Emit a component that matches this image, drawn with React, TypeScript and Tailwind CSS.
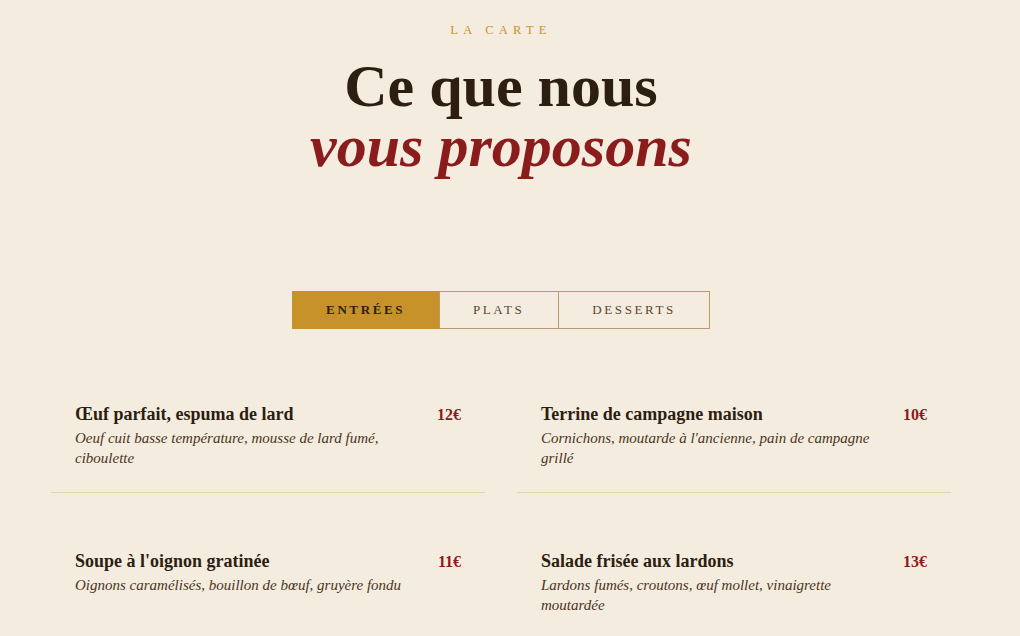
import { useState } from "react";

type Dish = {
  name: string;
  description: string;
  price: string;
};

const menu: Record<string, Dish[]> = {
  entrees: [
    {
      name: "Œuf parfait, espuma de lard",
      description: "Oeuf cuit basse température, mousse de lard fumé, ciboulette",
      price: "12€",
    },
    {
      name: "Terrine de campagne maison",
      description: "Cornichons, moutarde à l'ancienne, pain de campagne grillé",
      price: "10€",
    },
    {
      name: "Soupe à l'oignon gratinée",
      description: "Oignons caramélisés, bouillon de bœuf, gruyère fondu",
      price: "11€",
    },
    {
      name: "Salade frisée aux lardons",
      description: "Lardons fumés, croutons, œuf mollet, vinaigrette moutardée",
      price: "13€",
    },
  ],
  plats: [
    {
      name: "Bœuf bourguignon",
      description: "Joue de bœuf mijotée au vin rouge, carottes, pommes vapeur",
      price: "24€",
    },
    {
      name: "Confit de canard",
      description: "Cuisse de canard confite, pommes sarladaises",
      price: "22€",
    },
  ],
  desserts: [
    {
      name: "Crème brûlée",
      description: "Vanille de Madagascar, cassonade caramélisée",
      price: "8€",
    },
    {
      name: "Tarte Tatin",
      description: "Pommes caramélisées, crème fraîche d'Isigny",
      price: "9€",
    },
  ],
};

const tabs = [
  { id: "entrees", label: "Entrées" },
  { id: "plats", label: "Plats" },
  { id: "desserts", label: "Desserts" },
];

const serif = "font-['Liberation_Serif',serif]";

export default function App() {
  const [active, setActive] = useState("entrees");

  return (
    // pr leaves room where the scrollbar sits in the original capture
    <div className={`min-h-screen bg-[#f5ece0] pr-[18px] text-[#2c1e10] ${serif}`}>
      <section className="pt-[22px] pb-24">
        {/* Header */}
        <div className="text-center">
          <p className="text-[12.5px] leading-4 uppercase tracking-[0.42em] text-[#c8922b]">
            La carte
          </p>
          <h2 className="mt-[18px] text-[60px] leading-[60px] font-bold text-[#2c1e10]">
            Ce que nous
            <br />
            <em className="text-[#8b1c1c]">vous proposons</em>
          </h2>
        </div>

        {/* Tabs */}
        <div className="mt-[115px] flex justify-center">
          {tabs.map((tab, i) => (
            <button
              key={tab.id}
              onClick={() => setActive(tab.id)}
              className={[
                "px-[33.5px] py-[10px] text-[13px] leading-[16px] uppercase tracking-[0.2em] border border-[#b89a6e]",
                i > 0 ? "-ml-px" : "",
                active === tab.id
                  ? "bg-[#c8922b] border-[#c8922b] text-[#2c1e10] font-semibold"
                  : "bg-transparent text-[#5a4630]",
              ].join(" ")}
            >
              {tab.label}
            </button>
          ))}
        </div>

        {/* Dishes */}
        <div className="mx-auto mt-[49px] grid w-[900px] grid-cols-2 gap-8">
          {menu[active].map((dish) => (
            <div key={dish.name} className="border-b border-[#e6d3a8] p-6">
              <div className="flex items-baseline justify-between gap-4">
                <div>
                  <h3 className="text-[18px] leading-6 font-bold text-[#2c1e10]">
                    {dish.name}
                  </h3>
                  <p className="mt-[2px] text-[15px] leading-5 italic text-[#4a3520]">
                    {dish.description}
                  </p>
                </div>
                <span className="shrink-0 text-[16px] font-bold text-[#8b1c1c]">
                  {dish.price}
                </span>
              </div>
            </div>
          ))}
        </div>
      </section>
    </div>
  );
}
